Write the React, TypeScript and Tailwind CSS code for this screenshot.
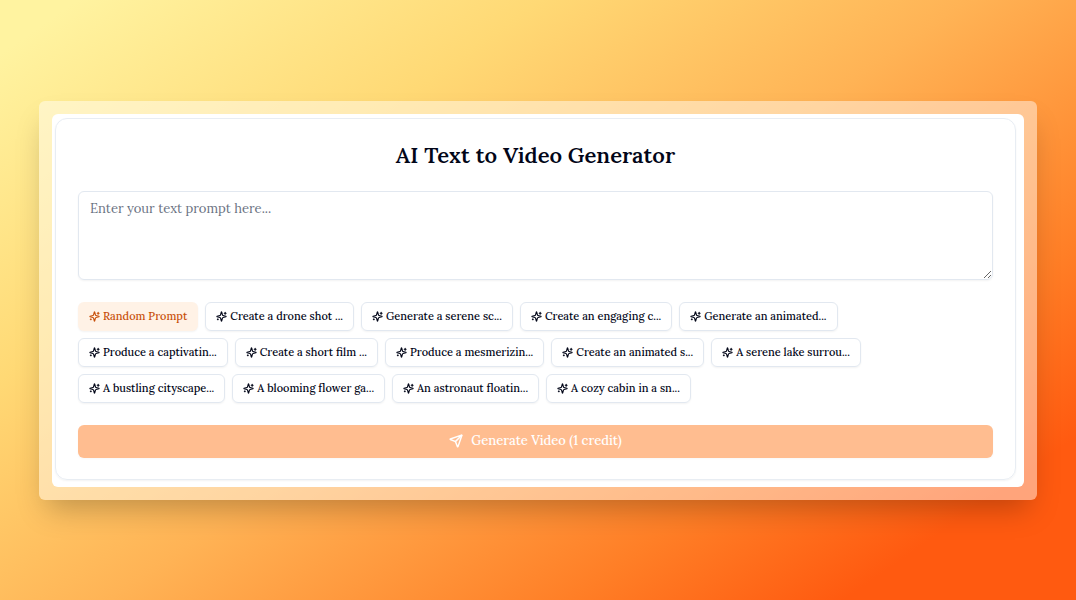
import React, {useState} from "react";
import {Send} from "lucide-react";

const prompts = [
    "Create a drone shot ...",
    "Generate a serene sc...",
    "Create an engaging c...",
    "Generate an animated...",
    "Produce a captivatin...",
    "Create a short film ...",
    "Produce a mesmerizin...",
    "Create an animated s...",
    "A serene lake surrou...",
    "A bustling cityscape...",
    "A blooming flower ga...",
    "An astronaut floatin...",
    "A cozy cabin in a sn...",
];

function StarIcon() {
    return (
        <svg viewBox="0 0 24 24" fill="none" stroke="currentColor" strokeWidth={2.5} strokeLinecap="round"
             strokeLinejoin="round" className="size-[11px] shrink-0" aria-hidden="true">
            <path d="M9.94 15.5A2 2 0 0 0 8.5 14.06l-6.14-1.58a.5.5 0 0 1 0-.96L8.5 9.94A2 2 0 0 0 9.94 8.5l1.58-6.14a.5.5 0 0 1 .96 0L14.06 8.5a2 2 0 0 0 1.44 1.44l6.14 1.58a.5.5 0 0 1 0 .96l-6.14 1.58a2 2 0 0 0-1.44 1.44l-1.58 6.14a.5.5 0 0 1-.96 0z"/>
            <path d="M20 3v4M22 5h-4M4 17v2M5 18H3"/>
        </svg>
    );
}

export default function App() {
    const [text, setText] = useState("");

    const pickRandom = () => setText(prompts[Math.floor(Math.random() * prompts.length)]);

    return (
        <main className="flex min-h-screen items-center justify-center bg-linear-[145deg,#fff3a0_4%,#ffd975_28%,#ffb355_50%,#ff7e26_74%,#ff5a10_88%] px-[39px] font-['Lora','Liberation_Serif',serif] text-slate-950">
            <div className="w-full rounded-md bg-white/45 p-[13px] shadow-[0_16px_28px_-8px_rgba(0,0,0,0.25)]">
                <div className="rounded-md bg-white pt-1 pr-2 pb-[7px] pl-[3px]">
                    <div className="rounded-xl border border-slate-200/80 px-[22px] pt-5 pb-[21px] shadow-xs">
                        <h1 className="text-center text-[22px] leading-8 font-semibold">AI Text to Video Generator</h1>

                        <textarea
                            aria-label="Text prompt"
                            value={text}
                            onChange={(e) => setText(e.target.value)}
                            placeholder="Enter your text prompt here..."
                            className="mt-5 block h-[89px] w-full resize-y rounded-md border border-slate-200 px-[11px] py-[7px] text-[13px] leading-5 shadow-xs placeholder:text-gray-500"
                        />

                        <div className="mt-[22px] flex flex-wrap gap-[7px]">
                            <button
                                onClick={pickRandom}
                                className="flex h-[29px] items-center gap-[3px] rounded-md bg-[#fff2e6] px-[11px] text-[11px] font-medium text-[#c8500a] shadow-xs"
                            >
                                <StarIcon/>
                                Random Prompt
                            </button>
                            {prompts.map((prompt) => (
                                <button
                                    key={prompt}
                                    onClick={() => setText(prompt)}
                                    className="flex h-[29px] items-center gap-[3px] rounded-md border border-slate-200 px-[10px] text-[11px] font-medium shadow-xs"
                                >
                                    <StarIcon/>
                                    {prompt}
                                </button>
                            ))}
                        </div>

                        <button
                            disabled={!text}
                            className="mt-[22px] flex h-[33px] w-full items-center justify-center gap-2 rounded-md bg-[#ff7d24] text-[13px] font-medium text-white shadow-xs disabled:opacity-50"
                        >
                            <Send size={14} strokeWidth={2.5}/>
                            Generate Video (1 credit)
                        </button>
                    </div>
                </div>
            </div>
        </main>
    );
}
